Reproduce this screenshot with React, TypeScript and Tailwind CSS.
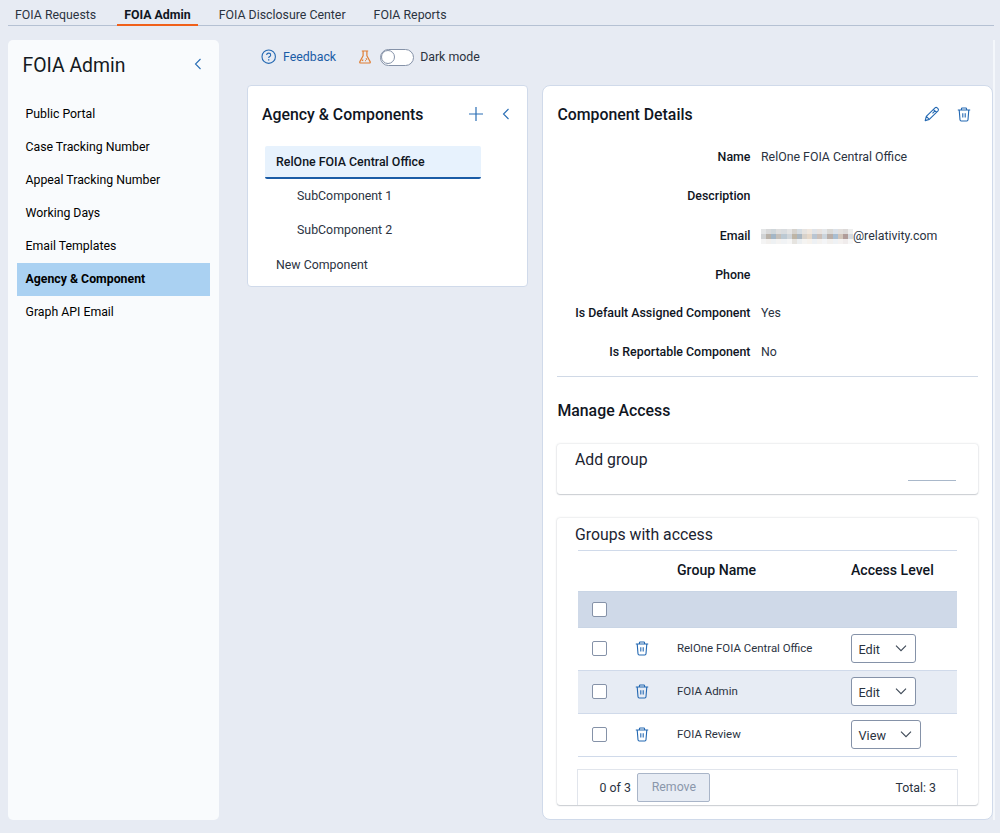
import type { ReactNode } from 'react';

const TABS = [
  { label: 'FOIA Requests', pad: 'pl-[7px] pr-[14px]' },
  { label: 'FOIA Admin', pad: 'px-[7px] mx-[7px]', active: true },
  { label: 'FOIA Disclosure Center', pad: 'px-[14px]' },
  { label: 'FOIA Reports', pad: 'px-[14px]' },
];

const MENU = [
  'Public Portal',
  'Case Tracking Number',
  'Appeal Tracking Number',
  'Working Days',
  'Email Templates',
  'Agency & Component',
  'Graph API Email',
];

// soft mosaic that hides the first part of the address
const MOSAIC = [
  ['#e3e5e6', '#d8d9da', '#cfd6da', '#dedede', '#d9dcdf', '#e4e4e4', '#d5d2cd', '#d5dce2', '#e6e3e0', '#efe7df', '#dfe3e8', '#e7e2df', '#e4e7ea', '#dad9d6', '#dbe1e8', '#e2dfdd', '#dcd9d8', '#eeeeee'],
  ['#d0d3d5', '#b9b2a9', '#a3b6c6', '#c5c0ba', '#bcc9d3', '#d0d5d9', '#beb5a6', '#aab7c2', '#d8d2cb', '#e6d8c9', '#b9c5d2', '#cbbfb8', '#cbd4dc', '#b9aea8', '#a9bed2', '#d2c6bb', '#b09c99', '#d6dbe0'],
  ['#f4f4f4', '#f2f0ee', '#eef1f3', '#f4f3f2', '#f1f3f5', '#f6f6f6', '#e6e4e0', '#eceff1', '#f5f4f2', '#f6f2ed', '#eef1f4', '#f4f2f0', '#f4f5f7', '#f2f0ee', '#eff2f5', '#f5f2f1', '#f0ecec', '#f8f8f8'],
];

const GROUPS = [
  { name: 'RelOne FOIA Central Office', level: 'Edit', row: 'bg-white', select: 'w-[65px]' },
  { name: 'FOIA Admin', level: 'Edit', row: 'bg-[#e7ecf4]', select: 'w-[65px]' },
  { name: 'FOIA Review', level: 'View', row: 'bg-white', select: 'w-[70px]' },
];

function ChevronLeft() {
  return (
    <svg width="8" height="12" viewBox="0 0 8 12" fill="none" stroke="#2a6eb5" strokeWidth="1.1">
      <path d="M6.5 1 1.5 6l5 5" />
    </svg>
  );
}

function ChevronDown() {
  return (
    <svg width="12" height="8" viewBox="0 0 12 8" fill="none" stroke="#3d4856" strokeWidth="1.1">
      <path d="M1 .7 6 5.700l5-5" />
    </svg>
  );
}

function TrashIcon() {
  return (
    <svg width="14" height="15" viewBox="0 0 14 15" fill="none" stroke="#2368b2" strokeWidth="1.1">
      <path d="M.8 3h12.4M4.4 3V1.9q0-.9.9-.9h3.4q.9 0 .9.9V3M2.2 3l.8 9.8q.1 1.2 1.2 1.2h5.6q1.1 0 1.2-1.2L11.8 3M5.8 6.3v4.3M8.2 6.3v4.3" />
    </svg>
  );
}

function PencilIcon() {
  return (
    <svg width="16" height="16" viewBox="0 0 16 16" fill="none" stroke="#2368b2" strokeWidth="1.1" strokeLinejoin="round">
      <path d="m1.2 14.6 1.1-4.2L11 1.8q1.1-1 2.2 0l.8.8q1 1.1 0 2.2L5.3 13.4zM2.3 10.4l3 3M9.5 3.3l3 3M11 4.800 8.500 7.300" />
    </svg>
  );
}

function FlaskIcon() {
  return (
    <svg width="12" height="14" viewBox="0 0 12 14" fill="none" stroke="#e07f35" strokeWidth="1.2" strokeLinejoin="round">
      <path d="M2.8 1h6.4M4.1 1v4.8L.9 11.6q-.6 1.4.8 1.4h8.6q1.4 0 .8-1.4L7.9 5.8V1M3 10.8l1.3-1.2M6 10.6h.8M7 8.2l.9 1.5" />
    </svg>
  );
}

function HelpIcon() {
  return (
    <svg width="16" height="16" viewBox="0 0 16 16" fill="none" stroke="#2368b2" strokeWidth="1.1">
      <circle cx="7.7" cy="7.7" r="6.7" />
      <path d="M5.7 6.1q0-2 2-2t2 1.8q0 1-1 1.6t-1 1.5" />
      <path d="M7.7 10.3v1.2" strokeWidth="1.3" />
    </svg>
  );
}

function Checkbox() {
  return <span className="block size-[15px] rounded-[2px] border border-[#8592a8] bg-white" />;
}

function Field({ label, height, children }: { label: string; height: string; children?: ReactNode }) {
  return (
    <div className={`flex items-start gap-[10.5px] ${height}`}>
      <dt className="w-[193.5px] text-right text-[12.4px] font-medium text-[#10161f]">{label}</dt>
      <dd className="flex items-center">{children}</dd>
    </div>
  );
}

function Sidebar() {
  return (
    <aside className="h-[780px] w-[211px] shrink-0 rounded-[5px] bg-[#f9fbfd]">
      <div className="flex h-[57px] items-start justify-between pt-[13px] pr-[17px] pl-[14.5px]">
        <h1 className="pt-px text-[19.4px] leading-6 text-[#141a22]">FOIA Admin</h1>
        <span className="pt-[5px]">
          <ChevronLeft />
        </span>
      </div>
      <ul className="px-[9px] pt-[.5px] text-[12.3px] text-black">
        {MENU.map((item) => (
          <li
            key={item}
            className={`flex h-[33px] items-center pl-[8.5px] ${item === 'Agency & Component' ? 'bg-[#aad1f2] font-bold' : ''}`}
          >
            {item}
          </li>
        ))}
      </ul>
    </aside>
  );
}

function Toolbar() {
  return (
    <div className="flex h-[34px] items-center pl-[14px]">
      <HelpIcon />
      <a className="ml-[6px] text-[#1a5ca6]">Feedback</a>
      <span className="ml-[23px]">
        <FlaskIcon />
      </span>
      <span className="ml-[8.5px] flex h-[17px] w-[34px] items-center rounded-full border border-[#8592a8] bg-white">
        <span className="size-[14px] rounded-full border border-[#8592a8]" />
      </span>
      <span className="ml-[6.5px]">Dark mode</span>
    </div>
  );
}

function ComponentTree() {
  return (
    <section className="h-[202px] w-[281px] shrink-0 rounded-[4px] border border-[#d0daea] bg-white px-[14px]">
      <div className="flex h-[56px] items-center">
        <h2 className="flex-1 pt-[2px] text-[15.85px] font-medium text-[#10161f]">Agency & Components</h2>
        <svg width="14" height="14" viewBox="0 0 14 14" stroke="#2a6eb5" strokeWidth="1.2">
          <path d="M7 0v14M0 7h14" />
        </svg>
        <span className="ml-[18.5px] mr-[3.5px]">
          <ChevronLeft />
        </span>
      </div>
      <ul className="mt-[4px] px-[3px] leading-[34px]">
        <li className="h-[33px] w-[216px] rounded-[2px] border-b-2 border-[#1a5ca6] bg-[#e7f2fd] pl-[11px] text-[12.4px] font-medium leading-[32px] text-[#10161f]">
          RelOne FOIA Central Office
        </li>
        <li className="pl-[32px]">SubComponent 1</li>
        <li className="pl-[32px]">SubComponent 2</li>
        <li className="pl-[11px] leading-[37px]">New Component</li>
      </ul>
    </section>
  );
}

function GroupsTable() {
  return (
    <div className="mt-[24px] h-[287px] rounded-[3px] bg-white pl-[18px] pr-[21px] shadow-[0_0_2px_rgba(40,50,70,.25),0_1px_1px_rgba(40,50,70,.18)]">
      <h3 className="h-[32px] text-[15.8px] leading-[33px] text-[#1c2431]">Groups with access</h3>
      <div className="ml-[3px]">
        <div className="flex h-[41px] items-center border-t border-[#d0daea] pl-[99px] text-[14.1px] font-medium text-[#10161f]">
          <span className="w-[174px]">Group Name</span>
          <span>Access Level</span>
        </div>
        <div className="flex h-[37px] items-center border-y border-[#c9d5e5] bg-[#cfd9e8] pl-[13.5px]">
          <Checkbox />
        </div>
        {GROUPS.map((group) => (
          <div key={group.name} className={`flex h-[43px] items-center border-b border-[#d0daea] pb-px pl-[13.5px] ${group.row}`}>
            <Checkbox />
            <span className="ml-[28.5px]">
              <TrashIcon />
            </span>
            <span className="ml-[28px] w-[173.5px] text-[11.45px]">{group.name}</span>
            <span
              className={`flex h-[29px] items-center justify-between rounded-[3px] border border-[#8592a8] bg-white pl-[7px] pr-[8px] text-[12.7px] ${group.select}`}
            >
              <span className="pt-[3px]">{group.level}</span>
              <ChevronDown />
            </span>
          </div>
        ))}
        <div className="mt-[12px] -mr-px -ml-px flex h-[36px] items-center border border-b-0 border-[#e1e5ec] pl-[21.5px] pr-[21px]">
          <span className="pt-px">0 of 3</span>
          <button className="ml-[6.5px] h-[29px] w-[73px] rounded-[2px] border border-[#a9b5c8] bg-[#e7ecf4] text-[#8a97ab]">Remove</button>
          <span className="ml-auto pt-px">Total: 3</span>
        </div>
      </div>
    </div>
  );
}

function Details() {
  return (
    <section className="h-[735px] w-[451px] shrink-0 rounded-[8px] border border-[#d0daea] bg-white px-[14px]">
      <div className="flex h-[56px] items-center">
        <h2 className="flex-1 pt-[2px] pl-[.4px] text-[15.85px] font-medium text-[#10161f]">Component Details</h2>
        <PencilIcon />
        <span className="ml-[17px] mr-[7px]">
          <TrashIcon />
        </span>
      </div>
      <dl className="h-[235px] border-b border-[#d0d9e6] pt-[6px] leading-[18px]">
        <Field label="Name" height="h-[39px]">RelOne FOIA Central Office</Field>
        <Field label="Description" height="h-[40px]" />
        <Field label="Email" height="h-[39px]">
          <span className="grid w-[92px] grid-cols-18">
            {MOSAIC.flat().map((color, i) => (
              <span key={i} className="h-[5px]" style={{ backgroundColor: color }} />
            ))}
          </span>
          @relativity.com
        </Field>
        <Field label="Phone" height="h-[38px]" />
        <Field label="Is Default Assigned Component" height="h-[39px]">Yes</Field>
        <Field label="Is Reportable Component" height="h-[39px]">No</Field>
      </dl>
      <h2 className="mt-[22px] pl-[.4px] text-[15.85px] font-medium leading-6 text-[#10161f]">Manage Access</h2>
      <div className="mt-[21px] flex h-[50px] items-start justify-between rounded-[3px] bg-white pl-[18px] pr-[22px] shadow-[0_0_2px_rgba(40,50,70,.25),0_1px_1px_rgba(40,50,70,.18)]">
        <h3 className="text-[15.8px] leading-[32px] text-[#1c2431]">Add group</h3>
        <span className="h-[37px] w-[48px] border-b border-[#a9b8ca]" />
      </div>
      <GroupsTable />
    </section>
  );
}

export default function App() {
  return (
    <div className="h-[833px] w-[1000px] overflow-hidden bg-[#e7ebf3] font-['Roboto',sans-serif] text-[12.35px] text-[#2b333f]">
      <nav className="ml-[8px] mr-[6px] flex h-[26px] border-b border-[#b5c1d3] text-[12.35px]">
        {TABS.map((tab) => (
          <a
            key={tab.label}
            className={`h-[26px] whitespace-nowrap leading-[30px] ${tab.pad} ${
              tab.active ? 'border-b-2 border-[#f0601a] font-bold text-[#10161f]' : ''
            }`}
          >
            {tab.label}
          </a>
        ))}
      </nav>
      <div className="flex pt-[14px] pl-[8px]">
        <Sidebar />
        <main className="ml-[28px] w-[748px] border-r-2 border-[#f4f7fb]">
          <Toolbar />
          <div className="mt-[11px] flex gap-[14px]">
            <ComponentTree />
            <Details />
          </div>
        </main>
      </div>
    </div>
  );
}
